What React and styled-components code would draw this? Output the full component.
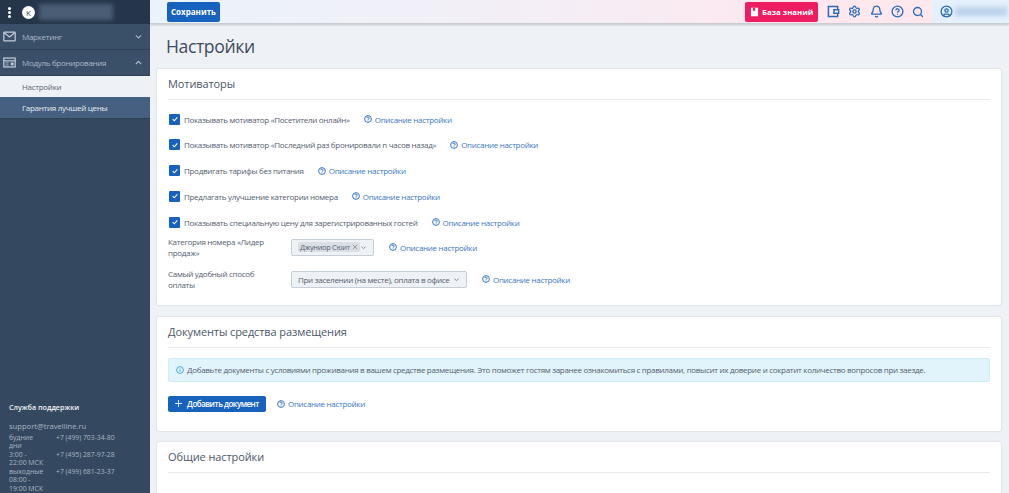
import React from 'react';
import styled, { createGlobalStyle } from 'styled-components';
import { Settings, Bell, CircleHelp, Search, CircleUser } from 'lucide-react';

const Global = createGlobalStyle`
  html, body { margin: 0; padding: 0; height: 100%; overflow: hidden; }
  body { font-family: "Open Sans", "Liberation Sans", sans-serif; background: #eef1f5; color: #4d5a6b; }
  * { box-sizing: border-box; }
`;

const Page = styled.div`
  display: flex;
  width: 1009px;
  height: 493px;
  overflow: hidden;
`;

/* sidebar */
const Side = styled.aside`
  width: 150px;
  flex: none;
  height: 493px;
  background: #34495f;
  display: flex;
  flex-direction: column;
`;
const SideTop = styled.div`
  height: 24px;
  background: #25364a;
  display: flex;
  align-items: center;
  padding-left: 8px;
`;
const Dots = styled.span`
  width: 3px;
  height: 3px;
  border-radius: 50%;
  background: #fff;
  box-shadow: 0 -4px 0 #fff, 0 4px 0 #fff;
`;
const Avatar = styled.span`
  width: 13px;
  height: 13px;
  margin-left: 11px;
  border-radius: 50%;
  background: #fff;
  color: #34495f;
  font-size: 8px;
  line-height: 13px;
  text-align: center;
`;
const BlurName = styled.span`
  width: ${p => p.$w}px;
  height: ${p => p.$h}px;
  margin-left: ${p => p.$ml}px;
  background: ${p => p.$bg};
  filter: blur(2px);
`;
const MenuItem = styled.div`
  height: 26px;
  display: flex;
  align-items: center;
  padding: 0 7px 0 3px;
  background: #3a5069;
  border-bottom: 1px solid #2d4056;
  color: #aab6c3;
  font-size: 8px;
  letter-spacing: -.3px;
  svg { flex: none; }
`;
const MenuLabel = styled.span`
  margin-left: 6px;
  flex: 1;
`;
const SubItem = styled.div`
  height: ${p => p.$active ? 22 : 21}px;
  display: flex;
  align-items: center;
  padding: 0 0 1px 22px;
  font-size: 8px;
  letter-spacing: -.3px;
  background: ${p => p.$active ? '#456080' : '#eef1f5'};
  color: ${p => p.$active ? '#e8edf2' : '#5b6878'};
  font-weight: ${p => p.$active ? 500 : 400};
  border-bottom: ${p => p.$active ? '1px solid #2d4056' : 'none'};
`;
const Support = styled.div`
  margin-top: auto;
  padding: 0 9px;
  color: #a9b5c2;
`;
const SupportTitle = styled.div`
  color: #f0f3f6;
  font-size: 7.2px;
  font-weight: 600;
  line-height: 10px;
  margin-bottom: 8px;
`;
const SupportMail = styled.div`
  font-size: 7.6px;
  line-height: 12px;
  margin-bottom: 2px;
`;
const Hours = styled.div`
  display: grid;
  grid-template-columns: 47px 1fr;
  font-size: 6.9px;
  line-height: 8.5px;
`;
const HoursText = styled.span`
  white-space: pre-line;
`;
const Phone = styled.span`
  font-size: 6.8px;
`;

/* topbar */
const Main = styled.div`
  flex: 1;
  min-width: 0;
  display: flex;
  flex-direction: column;
`;
const Top = styled.header`
  height: 24px;
  flex: none;
  display: flex;
  align-items: center;
  padding: 0 0 0 17px;
  background: linear-gradient(90deg, #eaf3fb 0%, #f4eef6 45%, #ffe7ee 80%);
  border-bottom: 1px solid #c9cdd2;
  box-shadow: 0 1px 2px rgba(60, 70, 85, .25);
  position: relative;
`;
const SaveBtn = styled.button`
  height: 20px;
  width: 53px;
  padding: 0;
  border: 0;
  border-radius: 2px;
  background: #1662bd;
  color: #fff;
  font: 700 8px "Open Sans", sans-serif;
`;
const KnowledgeBtn = styled.button`
  margin-left: auto;
  height: 20px;
  width: 73px;
  display: flex;
  align-items: center;
  justify-content: center;
  gap: 3px;
  padding: 0;
  border: 0;
  border-radius: 2px;
  background: #ee1c60;
  color: #fff;
  font: 700 7.8px "Open Sans", sans-serif;
`;
const TopIcons = styled.div`
  display: flex;
  align-items: center;
  gap: 8.2px;
  margin-left: 9px;
  color: #2a6bb8;
  svg { display: block; }
`;
const UserBox = styled.div`
  width: 77px;
  height: 23px;
  margin-left: 8px;
  padding-left: 8px;
  display: flex;
  align-items: center;
  background: #e4f0fc;
  color: #2a6bb8;
`;

/* content */
const Content = styled.main`
  flex: 1;
  padding: 0 8px 0 7px;
  overflow: hidden;
`;
const Title = styled.h1`
  margin: 10px 0 0 9px;
  height: 35px;
  font-size: 17.6px;
  letter-spacing: -.4px;
  line-height: 24px;
  font-weight: 400;
  color: #3f4d5e;
`;
const Card = styled.section`
  background: #fff;
  border-radius: 2px;
  box-shadow: 0 0 2px rgba(70, 85, 105, .28);
  padding: 0 11px;
  margin-bottom: 11.5px;
  height: ${p => p.$h}px;
`;
const CardTitle = styled.h2`
  margin: 0;
  height: 31px;
  padding-top: 7px;
  font-size: 11px;
  letter-spacing: -.1px;
  line-height: 16px;
  font-weight: 400;
  color: #4b5767;
  border-bottom: 1px solid #e6e9ee;
`;
const Rows = styled.div`
  padding-top: 11px;
  display: flex;
  flex-direction: column;
  gap: 9.8px;
`;
const CheckRow = styled.div`
  height: 16px;
  display: flex;
  align-items: center;
  padding-left: 1px;
  font-size: 8px;
  letter-spacing: -.3px;
  color: #55606f;
`;
const Box = styled.span`
  width: 11px;
  height: 11px;
  flex: none;
  margin-right: 4px;
  background: #1662bd;
  display: flex;
  align-items: center;
  justify-content: center;
  border-radius: 1px;
`;
const HelpLink = styled.a`
  display: inline-flex;
  align-items: center;
  gap: 3px;
  margin-left: ${p => p.$ml || 14}px;
  color: #3a78c4;
  font-size: 8px;
  letter-spacing: -.3px;
  white-space: nowrap;
  svg { flex: none; }
`;
const FieldRow = styled.div`
  display: flex;
  align-items: center;
  height: ${p => p.$h}px;
  margin-top: ${p => p.$mt}px;
`;
const FieldLabel = styled.div`
  width: 123px;
  padding-right: 17px;
  font-size: 8px;
  letter-spacing: -.3px;
  line-height: 11px;
  color: #55606f;
`;
const Select = styled.div`
  height: 17px;
  width: ${p => p.$w}px;
  flex: none;
  display: flex;
  align-items: center;
  padding: 0 6px 0 ${p => p.$pl}px;
  background: #eef1f5;
  border: 1px solid #c6ced8;
  border-radius: 2px;
  font-size: 8px;
  letter-spacing: -.3px;
  color: #55606f;
  white-space: nowrap;
`;
const SelectText = styled.span`
  flex: 1;
`;
const Tag = styled.span`
  height: 10px;
  margin-right: auto;
  display: flex;
  align-items: center;
  gap: 2px;
  padding: 0 2px;
  background: #dadfe6;
  border-radius: 2px;
  font-size: 7.4px;
  letter-spacing: -.3px;
`;
const Notice = styled.div`
  margin-top: 10px;
  height: 24px;
  display: flex;
  align-items: center;
  gap: 3px;
  padding-left: 7px;
  background: #e2f4fb;
  border: 1px solid #d0ecf8;
  border-radius: 2px;
  font-size: 8px;
  letter-spacing: -.3px;
  color: #55606f;
  white-space: nowrap;
  svg { flex: none; }
`;
const DocRow = styled.div`
  margin-top: 14px;
  display: flex;
  align-items: center;
`;
const AddBtn = styled.button`
  width: 98px;
  height: 16px;
  padding: 0;
  display: flex;
  align-items: center;
  justify-content: center;
  gap: 5px;
  border: 0;
  border-radius: 2px;
  background: #1662bd;
  color: #fff;
  font: 600 8px "Open Sans", sans-serif;
  letter-spacing: -.5px;
`;

const Help = () => (
  <svg width="8" height="8" viewBox="0 0 16 16" fill="none" stroke="currentColor" strokeWidth="2">
    <circle cx="8" cy="8" r="6.8" />
    <path d="M5.8 6.200a2.200 2.200 0 1 1 3.400 1.900c-.8.5-1.200 1-1.200 1.800M8 11v1.500" />
  </svg>
);

const Setting = ({ ml }) => (
  <HelpLink $ml={ml}><Help />Описание настройки</HelpLink>
);

const Chevron = ({ up, color = '#aab6c3', size = 9 }) => (
  <svg width={size} height={size} viewBox="0 0 12 12" fill="none" stroke={color} strokeWidth="1.6">
    <path d={up ? 'M2.500 8l3.500-3.500L9.500 8' : 'M2.500 4.500L6 8l3.500-3.500'} />
  </svg>
);

const Tick = () => (
  <svg width="8" height="8" viewBox="0 0 12 12" fill="none" stroke="#fff" strokeWidth="1.6">
    <path d="M2.500 6.300l2.500 2.400 4.500-5" />
  </svg>
);

const motivators = [
  'Показывать мотиватор «Посетители онлайн»',
  'Показывать мотиватор «Последний раз бронировали n часов назад»',
  'Продвигать тарифы без питания',
  'Предлагать улучшение категории номера',
  'Показывать специальную цену для зарегистрированных гостей',
];

const hours = [
  ['будние\nдни', '+7 (499) 703-34-80'],
  ['3:00 -\n22:00 МСК', '+7 (495) 287-97-28'],
  ['выходные\n08:00 -\n19:00 МСК', '+7 (499) 681-23-37'],
];

export default function App() {
  return (
    <Page>
      <Global />
      <Side>
        <SideTop>
          <Dots />
          <Avatar>K</Avatar>
          <BlurName $w={74} $h={16} $ml={4} $bg="#4a5d73" />
        </SideTop>
        <MenuItem>
          <svg width="13" height="11" viewBox="0 0 16 13" fill="none" stroke="#c4cdd7" strokeWidth="1.5">
            <rect x="1" y="1" width="14" height="11" rx="1" />
            <path d="M1.500 2l6.500 5 6.500-5" />
          </svg>
          <MenuLabel>Маркетинг</MenuLabel>
          <Chevron />
        </MenuItem>
        <MenuItem>
          <svg width="13" height="11" viewBox="0 0 16 13" fill="none" stroke="#c4cdd7" strokeWidth="1.5">
            <rect x="1" y="1" width="14" height="11" />
            <path d="M1 4.500h14" />
            <rect x="9.500" y="6.500" width="3.500" height="3.500" fill="#c4cdd7" stroke="none" />
            <path d="M3 7h4M3 9.500h4" strokeWidth="1" />
          </svg>
          <MenuLabel>Модуль бронирования</MenuLabel>
          <Chevron up />
        </MenuItem>
        <SubItem>Настройки</SubItem>
        <SubItem $active>Гарантия лучшей цены</SubItem>
        <Support>
          <SupportTitle>Служба поддержки</SupportTitle>
          <SupportMail>support@travelline.ru</SupportMail>
          <Hours>
            {hours.map(([time, phone]) => (
              <React.Fragment key={phone}>
                <HoursText>{time}</HoursText>
                <Phone>{phone}</Phone>
              </React.Fragment>
            ))}
          </Hours>
        </Support>
      </Side>
      <Main>
        <Top>
          <SaveBtn>Сохранить</SaveBtn>
          <KnowledgeBtn>
            <svg width="9" height="10" viewBox="0 0 12 14" fill="#fff">
              <path d="M1 1h10v12H1z" />
              <path d="M4 1h3v5L5.500 4.800 4 6z" fill="#ee1c60" />
            </svg>
            База знаний
          </KnowledgeBtn>
          <TopIcons>
            <svg width="13" height="13" viewBox="0 0 14 14" fill="none" stroke="currentColor" strokeWidth="1.6">
              <path d="M1.500 1.500h10v11h-10z" />
              <path d="M12.500 5H7.500v4h5z" fill="#fff" />
            </svg>
            <Settings size={13} strokeWidth={2.4} />
            <Bell size={13} strokeWidth={2.4} />
            <CircleHelp size={13} strokeWidth={2.4} />
            <Search size={12} strokeWidth={2.6} />
          </TopIcons>
          <UserBox>
            <CircleUser size={13} strokeWidth={2.4} />
            <BlurName $w={52} $h={9} $ml={2} $bg="#bcd3ea" />
          </UserBox>
        </Top>
        <Content>
          <Title>Настройки</Title>
          <Card $h={236}>
            <CardTitle>Мотиваторы</CardTitle>
            <Rows>
              {motivators.map(text => (
                <CheckRow key={text}>
                  <Box><Tick /></Box>
                  {text}
                  <Setting />
                </CheckRow>
              ))}
            </Rows>
            <FieldRow $h={22} $mt={6}>
              <FieldLabel>Категория номера «Лидер продаж»</FieldLabel>
              <Select $w={83} $pl={6}>
                <Tag>Джуниор Сюит
                  <svg width="6" height="6" viewBox="0 0 8 8" stroke="#7c8794" strokeWidth="1"><path d="M1 1l6 6M7 1l-6 6" /></svg>
                </Tag>
                <Chevron color="#7c8794" size={7} />
              </Select>
              <Setting ml={15} />
            </FieldRow>
            <FieldRow $h={22} $mt={10}>
              <FieldLabel>Самый удобный способ оплаты</FieldLabel>
              <Select $w={176} $pl={6}>
                <SelectText>При заселении (на месте), оплата в офисе</SelectText>
                <Chevron color="#7c8794" size={7} />
              </Select>
              <Setting ml={15} />
            </FieldRow>
          </Card>
          <Card $h={114}>
            <CardTitle>Документы средства размещения</CardTitle>
            <Notice>
              <svg width="8" height="8" viewBox="0 0 16 16" fill="none" stroke="#30a5dc" strokeWidth="1.800">
                <circle cx="8" cy="8" r="6.800" />
                <path d="M8 7v4.500M8 4.200v1.300" />
              </svg>
              Добавьте документы с условиями проживания в вашем средстве размещения. Это поможет гостям заранее ознакомиться с правилами, повысит их доверие и сократит количество вопросов при заезде.
            </Notice>
            <DocRow>
              <AddBtn>
                <svg width="7" height="7" viewBox="0 0 8 8" stroke="#fff" strokeWidth="1"><path d="M4 0v8M0 4h8" /></svg>
                Добавить документ
              </AddBtn>
              <Setting ml={11} />
            </DocRow>
          </Card>
          <Card $h={60}>
            <CardTitle>Общие настройки</CardTitle>
          </Card>
        </Content>
      </Main>
    </Page>
  );
}
